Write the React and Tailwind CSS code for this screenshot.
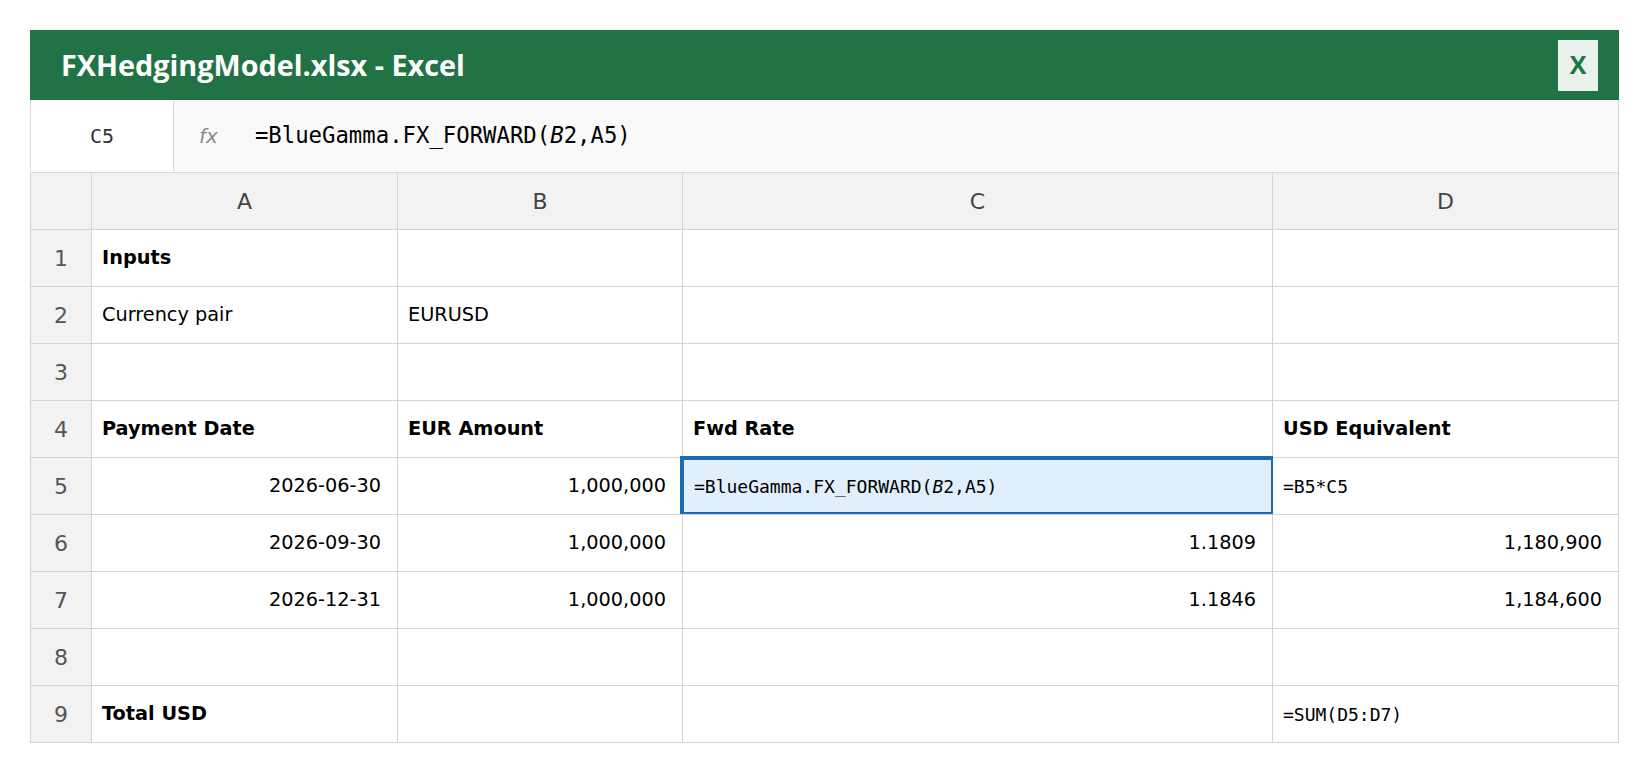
const cols = ['A', 'B', 'C', 'D'];

const rows = [
  { n: 1, cells: [{ t: 'Inputs', b: true }, null, null, null] },
  { n: 2, cells: [{ t: 'Currency pair' }, { t: 'EURUSD' }, null, null] },
  { n: 3, cells: [null, null, null, null] },
  {
    n: 4,
    cells: [
      { t: 'Payment Date', b: true },
      { t: 'EUR Amount', b: true },
      { t: 'Fwd Rate', b: true },
      { t: 'USD Equivalent', b: true },
    ],
  },
  {
    n: 5,
    cells: [
      { t: '2026-06-30', r: true },
      { t: '1,000,000', r: true },
      { formula: true, selected: true },
      { t: '=B5*C5', mono: true },
    ],
  },
  {
    n: 6,
    cells: [
      { t: '2026-09-30', r: true },
      { t: '1,000,000', r: true },
      { t: '1.1809', r: true },
      { t: '1,180,900', r: true },
    ],
  },
  {
    n: 7,
    cells: [
      { t: '2026-12-31', r: true },
      { t: '1,000,000', r: true },
      { t: '1.1846', r: true },
      { t: '1,184,600', r: true },
    ],
  },
  { n: 8, cells: [null, null, null, null] },
  { n: 9, cells: [{ t: 'Total USD', b: true }, null, null, { t: '=SUM(D5:D7)', mono: true }] },
];

const Formula = () => (
  <>
    =BlueGamma.FX_FORWARD(<i>B</i>2,A5)
  </>
);

const Cell = ({ cell }) => {
  if (!cell) return <div className="h-[57px] border-r border-b border-[#d4d4d4] bg-white" />;

  if (cell.selected) {
    return (
      <div className="relative h-[57px] border-r border-b border-[#d4d4d4] bg-[#e1eefc] flex items-center pl-[11px] pr-[16px] font-['DejaVu_Sans_Mono',monospace] text-[18px] text-black">
        <span className="relative">
          <Formula />
        </span>
        <div className="absolute -left-[3px] -top-[2px] -right-[1px] bottom-0 border-l-4 border-t-4 border-r-2 border-b-2 border-[#1b6bb3] pointer-events-none" />
      </div>
    );
  }

  return (
    <div
      className={`h-[57px] border-r border-b border-[#d4d4d4] bg-white flex items-center pl-[10px] pr-[16px] text-black ${
        cell.r ? 'justify-end' : 'justify-start'
      } ${
        cell.mono
          ? "font-['DejaVu_Sans_Mono',monospace] text-[18px]"
          : "font-['DejaVu_Sans',sans-serif] text-[19.3px]"
      } ${cell.b ? 'font-bold' : 'font-normal'}`}
    >
      {cell.t}
    </div>
  );
};

export default function App() {
  return (
    <div className="min-h-screen bg-white pt-[30px] pl-[30px]">
      <div className="w-[1589px]">
        {/* title bar */}
        <div className="h-[70px] bg-[#217346] flex items-center justify-between pl-[31px] pr-[21px]">
          <h1 className="font-['Open_Sans',sans-serif] font-bold text-[28.8px] text-white">
            FXHedgingModel.xlsx - Excel
          </h1>
          <button className="w-[40px] h-[51px] bg-[#e8f1eb] flex items-center justify-center font-['Open_Sans',sans-serif] font-bold text-[25px] text-[#217346]">
            X
          </button>
        </div>

        {/* formula bar */}
        <div className="h-[73px] flex bg-[#f9f9f9] border-l border-r border-b border-[#d9d9d9]">
          <div className="w-[143px] bg-white border-r border-[#d9d9d9] flex items-center justify-center font-['DejaVu_Sans_Mono',monospace] text-[20px] text-[#333]">
            C5
          </div>
          <div className="flex items-center pl-[25px]">
            <span className="font-['DejaVu_Sans',sans-serif] italic text-[20px] text-[#8a8a8a]">fx</span>
            <span className="ml-[37px] font-['DejaVu_Sans_Mono',monospace] text-[22.3px] text-black">
              <Formula />
            </span>
          </div>
        </div>

        {/* grid */}
        <div className="grid grid-cols-[61px_306px_285px_590px_1fr] border-l border-[#d4d4d4]">
          <div className="h-[57px] bg-[#f2f2f2] border-r border-b border-[#d4d4d4]" />
          {cols.map((c) => (
            <div
              key={c}
              className="h-[57px] bg-[#f2f2f2] border-r border-b border-[#d4d4d4] flex items-center justify-center font-['DejaVu_Sans',sans-serif] text-[22px] text-[#444]"
            >
              {c}
            </div>
          ))}
          {rows.map((row) => (
            <div key={row.n} className="contents">
              <div className="h-[57px] bg-[#f2f2f2] border-r border-b border-[#d4d4d4] flex items-center justify-center font-['DejaVu_Sans',sans-serif] text-[22px] text-[#555]">
                {row.n}
              </div>
              {row.cells.map((cell, i) => (
                <Cell key={i} cell={cell} />
              ))}
            </div>
          ))}
        </div>
      </div>
    </div>
  );
}
